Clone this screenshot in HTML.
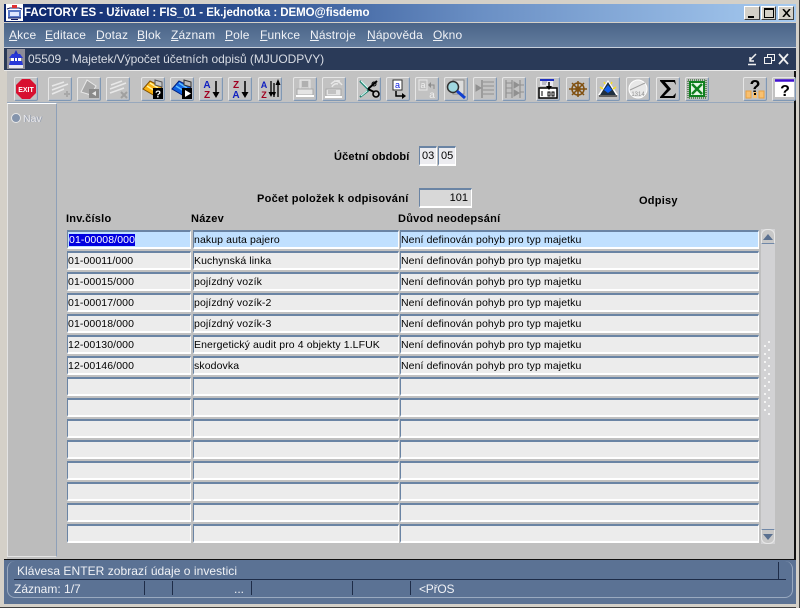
<!DOCTYPE html>
<html><head><meta charset="utf-8"><style>
html,body{margin:0;padding:0;width:800px;height:608px;overflow:hidden;background:#d4d0c8;font-family:"Liberation Sans",sans-serif;font-size:11px}
div,span,svg{position:absolute;box-sizing:border-box}
u{text-decoration:underline}
.t{white-space:nowrap;line-height:14px}
.b{font-weight:bold;color:#000;font-size:11px;letter-spacing:.25px}
.m{top:28px;color:#f0f2f6;font-size:12px;letter-spacing:.15px}
.tb{top:77px;width:24px;height:24px;background:#c2c2c2;border:1px solid;border-color:#e6e6e6 #8098b4 #8098b4 #e6e6e6;border-radius:2px;box-shadow:inset -1px -1px 0 #b4bcc8}
.tb svg{left:0;top:0;width:22px;height:22px}
.f{height:19px;background:#ececec;border:2px solid;border-color:#6a84a4 #fff #fff #6a84a4;border-right-width:1px;border-left-width:1px;color:#000;font-size:10.5px;letter-spacing:.1px;line-height:14px;padding-top:1px;white-space:nowrap;overflow:hidden}
.c1{left:67px;width:124px}.c2{left:193px;width:206px}.c3{left:400px;width:359px}
.a{background:#c0e0ff}
.win{top:6px;height:14px;background:#d4d0c8;border:1px solid;border-color:#fff #404040 #404040 #fff}
.sep{top:581px;width:1px;height:14px;background:#1e2c48}
</style></head><body>
<div style="left:0;top:0;width:800px;height:608px;border:3px solid #d4d0c8;border-right-width:3px"></div>
<div style="left:4px;top:4px;width:792px;height:18px;background:linear-gradient(90deg,#0a246a 0,#2d5090 30%,#6a8fc4 60%,#a6caf0 100%)"></div>
<svg style="left:6px;top:4px;width:17px;height:17px" viewBox="0 0 17 17"><rect width="17" height="17" fill="#fff"/><path d="M2 6h13v8H2z" fill="#5a78c8"/><path d="M4 8h9v4H4z" fill="#dfe6ff"/><path d="M1 5l3-1h9l3 1M2 14h13" stroke="#101860" fill="none"/><path d="M6 1h5v3H6z" fill="#e03030"/><path d="M5 15h7v1H5z" fill="#101860"/></svg>
<div class="t" style="left:24px;top:6px;color:#fff;font-weight:bold;font-size:11.5px;letter-spacing:-.05px">FACTORY ES - Uživatel : FIS_01 - Ek.jednotka : DEMO@fisdemo</div>
<div class="win" style="left:744px;width:16px"><div style="left:3px;top:9px;width:6px;height:2px;background:#000"></div></div>
<div class="win" style="left:761px;width:15px"><div style="left:2px;top:1px;width:10px;height:10px;border:1px solid #000;border-top-width:2px"></div></div>
<div class="win" style="left:778px;width:16px"><svg style="left:3px;top:2px;width:9px;height:8px" viewBox="0 0 9 8"><path d="M1 0l7 8M8 0L1 8" stroke="#000" stroke-width="1.6"/></svg></div>

<div style="left:4px;top:23px;width:792px;height:24px;background:linear-gradient(180deg,#4a6488,#637c9e)"></div>
<div class="t m" style="left:9px"><u>A</u>kce</div>
<div class="t m" style="left:45px"><u>E</u>ditace</div>
<div class="t m" style="left:96px"><u>D</u>otaz</div>
<div class="t m" style="left:137px"><u>B</u>lok</div>
<div class="t m" style="left:171px"><u>Z</u>áznam</div>
<div class="t m" style="left:225px"><u>P</u>ole</div>
<div class="t m" style="left:260px"><u>F</u>unkce</div>
<div class="t m" style="left:310px"><u>N</u>ástroje</div>
<div class="t m" style="left:367px"><u>N</u>ápověda</div>
<div class="t m" style="left:433px"><u>O</u>kno</div>

<div style="left:4px;top:47px;width:792px;height:24px;background:#2a3a58;border-top:1px solid #c8d0dc;border-bottom:1px solid #e8e8e8"></div>
<svg style="left:7px;top:49px;width:18px;height:20px" viewBox="0 0 18 20"><rect width="18" height="20" fill="#8c8c98"/><path d="M9 1l2 4h-4z" fill="#2030c0"/><path d="M5 5h8l3 4H2z" fill="#2838d8"/><path d="M4 9h10v3H4z" fill="#fff"/><path d="M3 12h12l1 4H2z" fill="#2838d8"/><path d="M2 16h14v3H2z" fill="#e8e8f0"/><path d="M7 9h1v3H7zM10 9h1v3h-1z" fill="#2030c0"/></svg>
<div class="t" style="left:28px;top:52px;color:#d8dce4;font-size:12px;letter-spacing:-.04px">05509 - Majetek/Výpočet účetních odpisů (MJUODPVY)</div>
<svg style="left:746px;top:52px;width:44px;height:14px" viewBox="0 0 44 14" fill="none" stroke="#f0f0f0"><path d="M2 12.500h8" stroke-width="1.500"/><path d="M10 2L4 8M4 5v4h4" stroke-width="1.500"/><rect x="18.500" y="5.500" width="7" height="6"/><path d="M21.500 5V2.500H28.500V8.500H26" /><path d="M33 2l9 10M42 2l-9 10" stroke-width="1.800"/></svg>

<!-- content -->
<div style="left:4px;top:71px;width:792px;height:488px;background:#c0c0c0;border-right:2px solid #111;border-left:3px solid #d4d0c8"></div>
<div style="left:7px;top:71px;width:787px;height:32px;background:#c2c2c2;border-bottom:1px solid #98a8bc"></div>
<div style="left:7px;top:103px;width:50px;height:454px;background:#bcbcbc;border:1px solid #c8ccd4;border-top-color:#fff;border-right-color:#8ea0b8;border-bottom-color:#e4e4e4;border-left-color:#e4e4e4"></div>

<!-- toolbar -->
<div class="tb" style="left:14px"><svg viewBox="0 0 22 22"><path d="M7 1h8l6 6v8l-6 6H7l-6-6V7z" fill="#d81030"/><text x="11" y="14" font-size="7" font-weight="bold" fill="#fff" text-anchor="middle" font-family="Liberation Sans">EXIT</text></svg></div>
<div class="tb" style="left:48px"><svg viewBox="0 0 22 22" fill="none" stroke="#e8e8e8" stroke-width="1.500"><path d="M3 12l16-6M3 16l12-5M3 8l12-4"/><path d="M15 16h6M18 13v6" stroke="#a8a8a8" stroke-width="2"/></svg></div>
<div class="tb" style="left:77px"><svg viewBox="0 0 22 22"><path d="M3 14l6-12 9 6-5 9z" fill="#a8a8a8" stroke="#e8e8e8"/><path d="M11 11h10v9H11z" fill="#8a8a8a"/><path d="M18 13v5l-4-2.500z" fill="#e8e8e8"/></svg></div>
<div class="tb" style="left:106px"><svg viewBox="0 0 22 22" fill="none" stroke="#e8e8e8" stroke-width="1.500"><path d="M3 11l16-6M3 15l14-5M4 7l11-4"/><path d="M14 14l6 6M20 14l-6 6" stroke="#a0a0a0" stroke-width="2"/></svg></div>
<div class="tb" style="left:141px"><svg viewBox="0 0 22 22"><path d="M1 11l7-8 12 6-7 9z" fill="#f8b010" stroke="#805000"/><path d="M5 8l8 5M8 5l8 5" stroke="#fff4a0" stroke-width="1.500"/><path d="M13 2l7 2v5l-7-2z" fill="#c8c8c8" stroke="#555"/><rect x="11" y="10" width="10" height="11" fill="#000"/><text x="16" y="19.500" font-size="10" font-weight="bold" fill="#fff" text-anchor="middle" font-family="Liberation Sans">?</text></svg></div>
<div class="tb" style="left:170px"><svg viewBox="0 0 22 22"><path d="M1 11l7-8 12 6-7 9z" fill="#1060e0" stroke="#002080"/><path d="M5 8l8 5M8 5l8 5" stroke="#60c0ff" stroke-width="1.500"/><path d="M13 2l7 2v5l-7-2z" fill="#b8b8b8" stroke="#333"/><rect x="11" y="10" width="10" height="11" fill="#000"/><path d="M14 12v7l6-3.500z" fill="#fff"/></svg></div>
<div class="tb" style="left:199px"><svg viewBox="0 0 22 22"><text x="7" y="10" font-size="10" font-weight="bold" fill="#1020c0" text-anchor="middle" font-family="Liberation Sans">A</text><text x="7" y="20" font-size="10" font-weight="bold" fill="#a00020" text-anchor="middle" font-family="Liberation Sans">Z</text><path d="M16 3v13" stroke="#000" stroke-width="1.500"/><path d="M12.500 14h7L16 20z"/></svg></div>
<div class="tb" style="left:228px"><svg viewBox="0 0 22 22"><text x="7" y="10" font-size="10" font-weight="bold" fill="#a00020" text-anchor="middle" font-family="Liberation Sans">Z</text><text x="7" y="20" font-size="10" font-weight="bold" fill="#1020c0" text-anchor="middle" font-family="Liberation Sans">A</text><path d="M16 3v13" stroke="#000" stroke-width="1.500"/><path d="M12.500 14h7L16 20z"/></svg></div>
<div class="tb" style="left:258px"><svg viewBox="0 0 22 22"><text x="5" y="10" font-size="9" font-weight="bold" fill="#1020c0" text-anchor="middle" font-family="Liberation Sans">A</text><text x="5" y="20" font-size="9" font-weight="bold" fill="#a00020" text-anchor="middle" font-family="Liberation Sans">Z</text><path d="M12 3v13M15 5v14M19 6v13" stroke="#000" stroke-width="1.300"/><path d="M9.500 14h5L12 19zM13 14h4l-2 5zM16.500 7h5L19 1z"/></svg></div>
<div class="tb" style="left:293px"><svg viewBox="0 0 22 22"><path d="M6 2h10v9H6z" fill="#d0d0d0" stroke="#e8e8e8"/><path d="M8 4h6M8 6h6M8 8h6" stroke="#909090"/><path d="M3 11h16v6H3z" fill="#e4e4e4" stroke="#a8a8a8"/><path d="M2 18h18" stroke="#fff" stroke-width="2"/></svg></div>
<div class="tb" style="left:322px"><svg viewBox="0 0 22 22" fill="none"><path d="M9 9a5 5 0 0 1 6-3M8 6a9 9 0 0 1 9-3M11 3a9 9 0 0 1 8 4" stroke="#e8e8e8" stroke-width="1.500"/><path d="M3 11h15v7H3z" fill="#e4e4e4" stroke="#a8a8a8"/><path d="M5 13h8M5 15h8" stroke="#a0a0a0"/><path d="M2 19h17" stroke="#fff" stroke-width="2"/></svg></div>
<div class="tb" style="left:357px"><svg viewBox="0 0 22 22" fill="none"><path d="M2 3l9 9-9 7" stroke="#208070" stroke-width="2"/><path d="M3 3l8 8M3 18l6-5" stroke="#d8fff8"/><path d="M10 11L19 3" stroke="#000" stroke-width="2"/><path d="M10 11l6 3" stroke="#000" stroke-width="2"/><circle cx="18" cy="16" r="3" stroke="#000" stroke-width="1.600"/><circle cx="16" cy="6" r="2" stroke="#000"/></svg></div>
<div class="tb" style="left:386px"><svg viewBox="0 0 22 22"><path d="M6 2h9v10H6z" fill="#fff" stroke="#333"/><text x="10.500" y="10" font-size="9" fill="#1020e0" text-anchor="middle" font-family="Liberation Sans">a</text><path d="M9 13v5h8" stroke="#000" stroke-width="1.500" fill="none"/><path d="M15 15l4 3-4 3z"/></svg></div>
<div class="tb" style="left:415px"><svg viewBox="0 0 22 22"><path d="M3 2h8v10H3z" fill="#c0c0c0" stroke="#e8e8e8"/><text x="7" y="10" font-size="9" fill="#f0f0f0" text-anchor="middle" font-family="Liberation Sans">a</text><path d="M13 7h5v4" stroke="#8c8c8c" fill="none"/><path d="M15 4v6l-3-3z" fill="#8c8c8c"/><text x="16" y="20" font-size="10" fill="#eee" text-anchor="middle" font-family="Liberation Sans">a</text></svg></div>
<div class="tb" style="left:444px"><svg viewBox="0 0 22 22"><path d="M8 2h11v14H8z" fill="#ddd" stroke="#888"/><circle cx="8" cy="9" r="5.500" fill="#a0d8e0" stroke="#303030" stroke-width="1.500"/><path d="M12 13l8 7" stroke="#1040d0" stroke-width="3"/></svg></div>
<div class="tb" style="left:473px"><svg viewBox="0 0 22 22" fill="none" stroke="#909090"><path d="M8 2v18" stroke-width="1.500"/><path d="M9 4h11M9 8h11M9 12h11M9 16h11"/><path d="M2 7v6l5-3z" fill="#909090"/></svg></div>
<div class="tb" style="left:502px"><svg viewBox="0 0 22 22" fill="none" stroke="#909090"><path d="M3 2v18M9 2v18M17 2v18" stroke-width="1.200"/><path d="M3 5h6M3 10h6M3 15h6M17 7h4M17 14h4"/><path d="M11 4v6l5-3zM11 12v6l5-3z" fill="#909090"/></svg></div>
<div class="tb" style="left:536px"><svg viewBox="0 0 22 22"><path d="M3 3h13v5H3z" fill="#e8e8f0"/><path d="M3 2h14" stroke="#2030c0" stroke-width="2"/><path d="M5 4h5M5 6h4" stroke="#9090a0"/><path d="M2 10h18v10H2z" fill="#fff" stroke="#000" stroke-width="1.500"/><path d="M12 4v5" stroke="#000" stroke-width="1.500"/><path d="M9 8h6l-3 4z"/><path d="M5 13v5M11 14h2v4h-2zM15 14h2v4h-2z" stroke="#000" fill="none"/></svg></div>
<div class="tb" style="left:566px"><svg viewBox="0 0 22 22" fill="none" stroke="#805010" stroke-width="1.500"><circle cx="11" cy="11" r="6"/><circle cx="11" cy="11" r="2" fill="#805010"/><path d="M2 11h18M11 3v16M5 5l12 12M17 5L5 17"/></svg></div>
<div class="tb" style="left:596px"><svg viewBox="0 0 22 22"><path d="M11 2L21 17H1z" fill="#fff"/><path d="M11 4L19 17H3z" fill="#203040"/><path d="M11 7l4 5-4 3-4-3z" fill="#1060f0"/><path d="M3 9l3 2M19 9l-3 2M7 4l1 2M15 4l-1 2" stroke="#f8e020" stroke-width="1.500"/><path d="M2 18h18" stroke="#000"/></svg></div>
<div class="tb" style="left:626px"><svg viewBox="0 0 22 22"><circle cx="11" cy="11" r="9" fill="#e8e8e8" stroke="#fff"/><path d="M3 12L18 5" stroke="#a0a0a0"/><text x="11" y="18" font-size="6" fill="#909090" text-anchor="middle" font-family="Liberation Sans">1314</text></svg></div>
<div class="tb" style="left:656px"><svg viewBox="0 0 22 22"><path d="M3 2h15l1 5-2-3H8l6 7-7 7h9l3-3-1 5H3v-1l7-8-7-8z" fill="#000"/></svg></div>
<div class="tb" style="left:685px"><svg viewBox="0 0 22 22"><path d="M3 3h16v16H3z" fill="#108020"/><path d="M5 5h12v12H5z" fill="#e8f8e8"/><path d="M6 6l10 10M16 6L6 16" stroke="#108020" stroke-width="2.500"/><path d="M2 2h18v18H2z" fill="none" stroke="#005000" stroke-dasharray="1 1"/></svg></div>
<div class="tb" style="left:743px"><svg viewBox="0 0 22 22"><text x="11" y="15" font-size="18" font-weight="bold" fill="#000" text-anchor="middle" font-family="Liberation Sans">?</text><path d="M2 13h5v7H2zM15 13h5v7h-5z" fill="#f8c070" stroke="#e8a040"/><path d="M9 14h4v6H9z" fill="#f8c070"/><path d="M10 15h2v2h-2z"/></svg></div>
<div class="tb" style="left:772px"><svg viewBox="0 0 22 22"><path d="M2 3h19v16H2z" fill="#fff"/><path d="M2 2.500h19" stroke="#4010d0" stroke-width="2.500"/><text x="12" y="18" font-size="16" font-weight="bold" fill="#000" text-anchor="middle" font-family="Liberation Sans">?</text></svg></div>

<!-- nav -->
<div style="left:11px;top:113px;width:10px;height:10px;border-radius:50%;background:#8494ac;border:1px solid #e8e8e8"></div>
<div class="t" style="left:23px;top:112px;color:#e8e8ec;font-size:10.5px;text-shadow:1px 0 0 #98a0b0">Nav</div>

<!-- labels -->
<div class="t b" style="left:334px;top:150px;letter-spacing:.17px">Účetní období</div>
<div class="f" style="left:419px;top:146px;width:18px;height:20px;background:#ececf0;padding-left:2px;padding-top:1px;font-size:11px;letter-spacing:0">03</div>
<div class="f" style="left:438px;top:146px;width:18px;height:20px;background:#ececf0;padding-left:2px;padding-top:1px;font-size:11px;letter-spacing:0">05</div>
<div class="t b" style="left:257px;top:192px;letter-spacing:.28px">Počet položek k odpisování</div>
<div class="f" style="left:419px;top:188px;width:53px;height:20px;background:#d8d8d8;text-align:right;padding-right:3px;padding-top:1px;font-size:11px;letter-spacing:0">101</div>
<div class="t b" style="left:639px;top:194px">Odpisy</div>
<div class="t b" style="left:66px;top:212px">Inv.číslo</div>
<div class="t b" style="left:191px;top:212px">Název</div>
<div class="t b" style="left:398px;top:212px">Důvod neodepsání</div>

<!-- rows -->
<div class="f c1 a" style="top:230px"><span style="position:static;margin-left:1px;background:#0000e0;color:#fff">01-00008/000</span></div><div class="f c2 a" style="top:230px">nakup auta pajero</div><div class="f c3 a" style="top:230px">Není definován pohyb pro typ majetku</div>
<div class="f c1" style="top:251px">01-00011/000</div><div class="f c2" style="top:251px">Kuchynská linka</div><div class="f c3" style="top:251px">Není definován pohyb pro typ majetku</div>
<div class="f c1" style="top:272px">01-00015/000</div><div class="f c2" style="top:272px">pojízdný vozík</div><div class="f c3" style="top:272px">Není definován pohyb pro typ majetku</div>
<div class="f c1" style="top:293px">01-00017/000</div><div class="f c2" style="top:293px">pojízdný vozík-2</div><div class="f c3" style="top:293px">Není definován pohyb pro typ majetku</div>
<div class="f c1" style="top:314px">01-00018/000</div><div class="f c2" style="top:314px">pojízdný vozík-3</div><div class="f c3" style="top:314px">Není definován pohyb pro typ majetku</div>
<div class="f c1" style="top:335px">12-00130/000</div><div class="f c2" style="top:335px">Energetický audit pro 4 objekty 1.LFUK</div><div class="f c3" style="top:335px">Není definován pohyb pro typ majetku</div>
<div class="f c1" style="top:356px">12-00146/000</div><div class="f c2" style="top:356px">skodovka</div><div class="f c3" style="top:356px">Není definován pohyb pro typ majetku</div>
<div class="f c1" style="top:377px"></div><div class="f c2" style="top:377px"></div><div class="f c3" style="top:377px"></div>
<div class="f c1" style="top:398px"></div><div class="f c2" style="top:398px"></div><div class="f c3" style="top:398px"></div>
<div class="f c1" style="top:419px"></div><div class="f c2" style="top:419px"></div><div class="f c3" style="top:419px"></div>
<div class="f c1" style="top:440px"></div><div class="f c2" style="top:440px"></div><div class="f c3" style="top:440px"></div>
<div class="f c1" style="top:461px"></div><div class="f c2" style="top:461px"></div><div class="f c3" style="top:461px"></div>
<div class="f c1" style="top:482px"></div><div class="f c2" style="top:482px"></div><div class="f c3" style="top:482px"></div>
<div class="f c1" style="top:503px"></div><div class="f c2" style="top:503px"></div><div class="f c3" style="top:503px"></div>
<div class="f c1" style="top:524px"></div><div class="f c2" style="top:524px"></div><div class="f c3" style="top:524px"></div>

<!-- scrollbar -->
<div style="left:761px;top:229px;width:14px;height:315px;background:#d2d2d4"></div>
<div style="left:761px;top:229px;width:14px;height:15px;background:#c8c8c8;border:1px solid #e8e8e8;border-bottom:1px solid #7088a8;border-radius:6px 6px 0 0"></div>
<svg style="left:763px;top:234px;width:10px;height:6px" viewBox="0 0 10 6"><path d="M5 0l5 6H0z" fill="#5a7090"/></svg>
<div style="left:761px;top:529px;width:14px;height:15px;background:#c8c8c8;border:1px solid #e8e8e8;border-top:1px solid #7088a8;border-radius:0 0 6px 6px"></div>
<svg style="left:763px;top:534px;width:10px;height:6px" viewBox="0 0 10 6"><path d="M0 0h10L5 6z" fill="#5a7090"/></svg>
<svg style="left:763px;top:338px;width:12px;height:78px" viewBox="0 0 12 78" fill="#f4f4f4"><path d="M5 3h2v2H5zM1 7h2v2H1zM5 11h2v2H5zM1 15h2v2H1zM5 19h2v2H5zM1 23h2v2H1zM5 27h2v2H5zM1 31h2v2H1zM5 35h2v2H5zM1 39h2v2H1zM5 43h2v2H5zM1 47h2v2H1zM5 51h2v2H5zM1 55h2v2H1zM5 59h2v2H5zM1 63h2v2H1zM5 67h2v2H5zM1 71h2v2H1zM5 75h2v2H5z"/></svg>

<!-- status -->
<div style="left:4px;top:559px;width:792px;height:1px;background:#111"></div>
<div style="left:4px;top:560px;width:792px;height:44px;background:#5b7294"></div>
<div style="left:7px;top:561px;width:786px;height:37px;border:1px solid #9aaac0;border-top:0;border-radius:8px"></div>
<div style="left:14px;top:579px;width:772px;height:1px;background:#1e2c48"></div>
<div style="left:778px;top:562px;width:1px;height:17px;background:#1e2c48"></div>
<div class="t" style="left:17px;top:564px;color:#f0f2f6;font-size:12px;letter-spacing:.05px">Klávesa ENTER zobrazí údaje o investici</div>
<div class="t" style="left:14px;top:582px;color:#f0f2f6;font-size:12px">Záznam: 1/7</div>
<div class="sep" style="left:144px"></div><div class="sep" style="left:172px"></div><div class="sep" style="left:251px"></div><div class="sep" style="left:352px"></div><div class="sep" style="left:410px"></div>
<div class="t" style="left:234px;top:582px;color:#f0f2f6;font-size:12px">...</div>
<div class="t" style="left:419px;top:582px;color:#f0f2f6;font-size:12px;letter-spacing:-.2px">&lt;PřOS</div>
<div style="left:0;top:604px;width:800px;height:4px;background:#d4d0c8;border-bottom:1px solid #404040"></div>
<div style="left:796px;top:0;width:4px;height:608px;background:#d4d0c8;border-right:1px solid #404040"></div>
</body></html>
